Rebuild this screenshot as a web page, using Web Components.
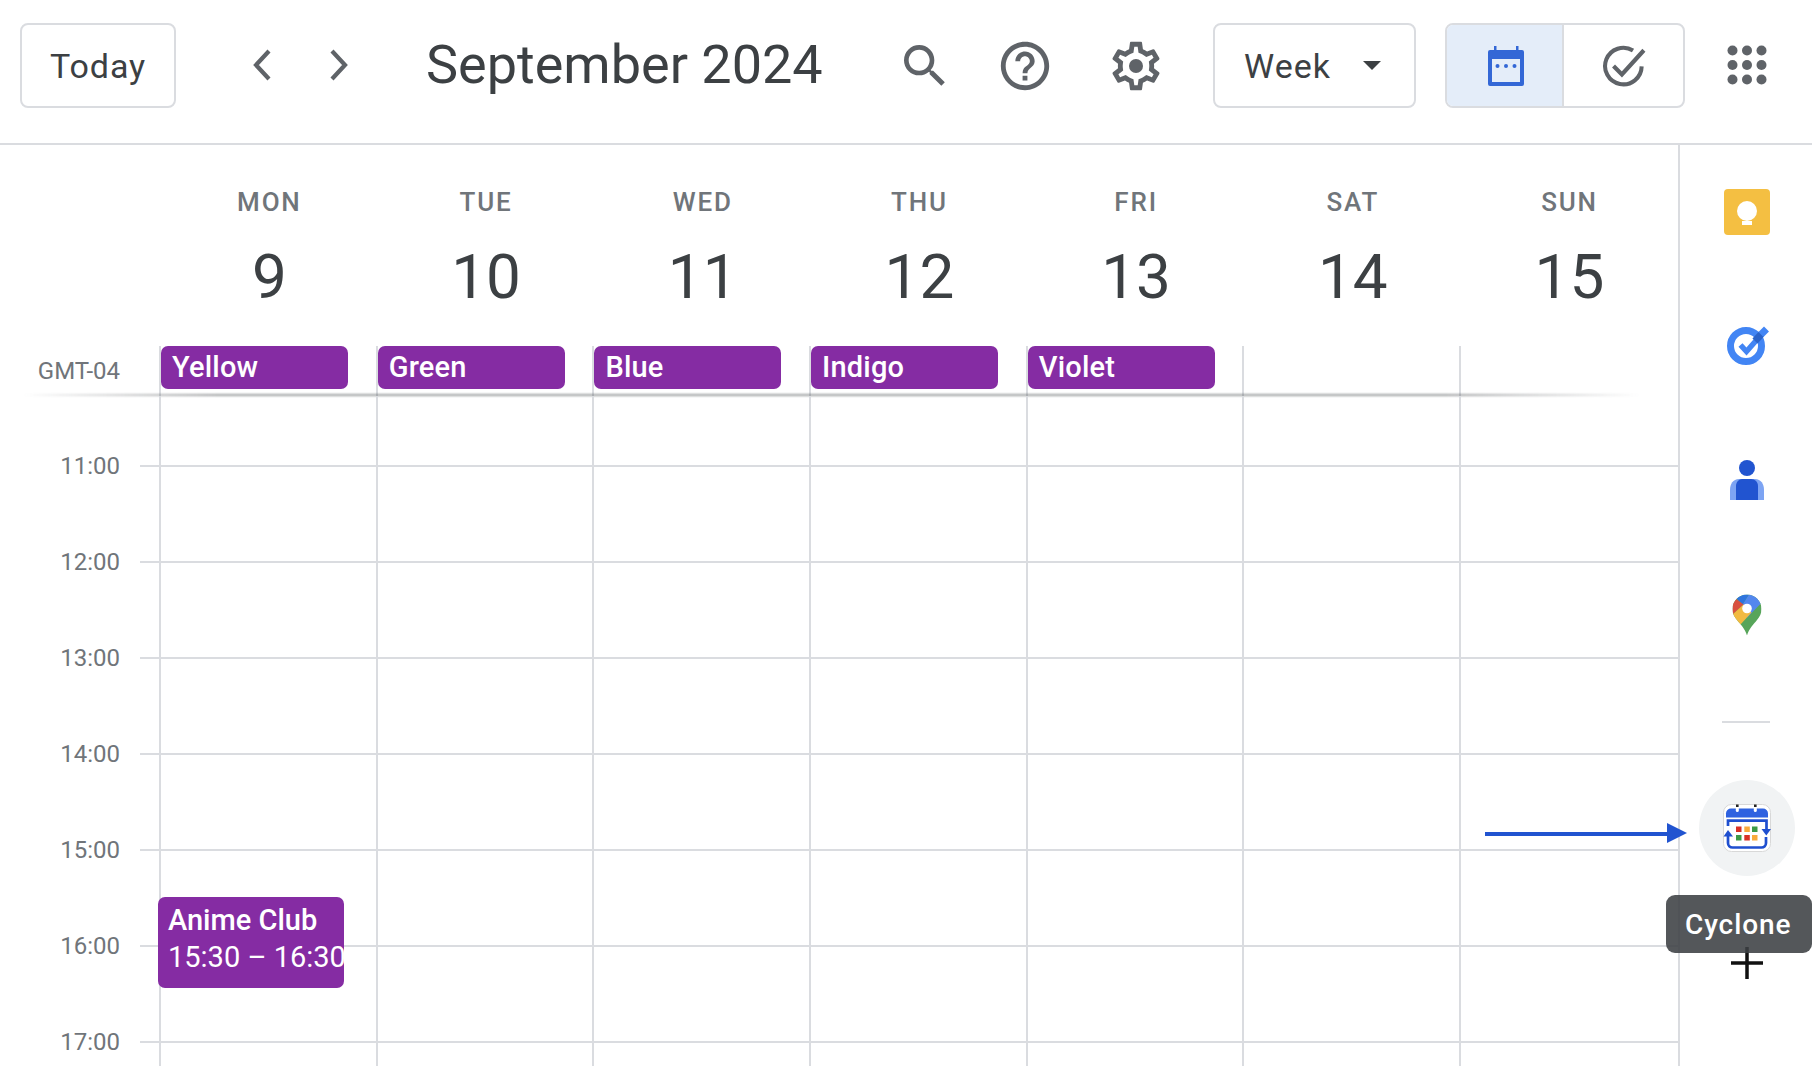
<!DOCTYPE html>
<html>
<head>
<meta charset="utf-8">
<title>Calendar</title>
<style>
  html, body { margin: 0; height: 100%; overflow: hidden; background: #fff; }
  body { font-family: Roboto, "Liberation Sans", sans-serif; color: #3c4043; }
</style>
</head>
<body>
<cal-app>
  <cal-toolbar slot="top" title-text="September 2024"></cal-toolbar>
  <week-view slot="main"></week-view>
  <side-panel slot="side"></side-panel>
</cal-app>

<script>
const GREY = '#5f6368';
const LINE = '#dadce0';

class CalApp extends HTMLElement {
  constructor() {
    super();
    this.shadow = this.attachShadow({ mode: 'open' });
  }

  connectedCallback() {
    this.shadow.innerHTML = `
      <style>
        :host { display: block; position: relative; width: 1812px; height: 1066px; overflow: hidden; }
        .body { display: flex; height: 921px; }
        .arrow { position: absolute; left: 1485px; top: 823px; }
        .tip {
          position: absolute; left: 1666px; top: 895px; width: 146px; height: 58px; box-sizing: border-box;
          padding-left: 19px; display: flex; align-items: center; border-radius: 9px;
          background: rgba(60, 64, 67, .88); color: #fff; font-size: 28px; font-weight: 500; letter-spacing: .9px;
        }
      </style>
      <slot name="top"></slot>
      <div class="body"><slot name="main"></slot><slot name="side"></slot></div>
      <svg class="arrow" width="202" height="20" viewBox="0 0 202 20">
        <path d="M0 11h184" stroke="#2154d0" stroke-width="4"/>
        <path d="M182 0l20 10-20 10z" fill="#2154d0"/>
      </svg>
      <div class="tip">Cyclone</div>
    `;
  }
}

class CalToolbar extends HTMLElement {
  constructor() {
    super();
    this.shadow = this.attachShadow({ mode: 'open' });
  }

  connectedCallback() {
    this.shadow.innerHTML = `
      <style>
        :host { display: flex; align-items: center; box-sizing: border-box; height: 145px; border-bottom: 2px solid ${LINE}; padding: 0 0 13px 20px; }
        svg { display: block; flex: none; }
        .btn {
          box-sizing: border-box; height: 85px; border: 2px solid ${LINE}; border-radius: 8px;
          display: flex; align-items: center; font-size: 34px; font-weight: 400; letter-spacing: .9px; margin-top: 1px;
        }
        .today { width: 156px; justify-content: center; }
        .title { font-size: 54px; line-height: 60px; margin-left: 64px; width: 471px; white-space: nowrap; }
        .week { width: 203px; padding-left: 29px; margin-left: 48px; margin-right: 29px; letter-spacing: 1px; color: #3c4043; }
        .week svg { margin-left: 32px; }
        .seg { width: 240px; overflow: hidden; padding: 0; }
        .seg div { height: 100%; display: flex; align-items: center; justify-content: center; }
        .seg .on { width: 117px; background: #e4edf9; border-right: 2px solid ${LINE}; padding-left: 2px; box-sizing: border-box; }
        .seg .off { flex: 1; }
      </style>
      <div class="btn today">Today</div>
      <svg style="margin-left:63px" width="44" height="44" viewBox="0 0 44 44"><path d="M30 8 L17 22 L30 36" fill="none" stroke="${GREY}" stroke-width="4.2"/></svg>
      <svg style="margin-left:35px" width="44" height="44" viewBox="0 0 44 44"><path d="M14 8 L27 22 L14 36" fill="none" stroke="${GREY}" stroke-width="4.2"/></svg>
      <div class="title">September 2024</div>
      <svg style="margin-top:1px" width="56" height="56" viewBox="0 0 24 24" fill="${GREY}"><path d="M15.5 14h-.79l-.28-.27A6.471 6.471 0 0 0 16 9.5 6.5 6.5 0 1 0 9.5 16c1.61 0 3.09-.59 4.23-1.57l.27.28v.79l5 4.99L20.49 19l-4.99-5zm-6 0C7.01 14 5 11.99 5 9.5S7.01 5 9.5 5 14 7.01 14 9.5 11.99 14 9.5 14z"/></svg>
      <svg style="margin-left:43px;margin-top:2px" width="58" height="58" viewBox="0 0 24 24" fill="${GREY}"><path d="M11 18h2v-2h-2v2zm1-16C6.48 2 2 6.48 2 12s4.48 10 10 10 10-4.48 10-10S17.52 2 12 2zm0 18c-4.41 0-8-3.59-8-8s3.59-8 8-8 8 3.59 8 8-3.59 8-8 8zm0-14c-2.21 0-4 1.79-4 4h2c0-1.1.9-2 2-2s2 .9 2 2c0 2-3 1.75-3 5h2c0-2.25 3-2.5 3-5 0-2.21-1.79-4-4-4z"/></svg>
      <svg style="margin-left:53px;margin-top:2px" width="58" height="58" viewBox="0 0 24 24" fill="${GREY}"><path d="M19.43 12.98c.04-.32.07-.64.07-.98 0-.34-.03-.66-.07-.98l2.11-1.65c.19-.15.24-.42.12-.64l-2-3.46c-.09-.16-.26-.25-.44-.25-.06 0-.12.01-.17.03l-2.49 1c-.52-.4-1.08-.73-1.69-.98l-.38-2.65C14.46 2.18 14.25 2 14 2h-4c-.25 0-.46.18-.49.42l-.38 2.65c-.61.25-1.17.59-1.69.98l-2.49-1c-.06-.02-.12-.03-.18-.03-.17 0-.34.09-.43.25l-2 3.46c-.13.22-.07.49.12.64l2.11 1.65c-.04.32-.07.65-.07.98 0 .33.03.66.07.98l-2.11 1.65c-.19.15-.24.42-.12.64l2 3.46c.09.16.26.25.44.25.06 0 .12-.01.17-.03l2.49-1c.52.4 1.08.73 1.69.98l.38 2.65c.03.24.24.42.49.42h4c.25 0 .46-.18.49-.42l.38-2.65c.61-.25 1.17-.59 1.69-.98l2.49 1c.06.02.12.03.18.03.17 0 .34-.09.43-.25l2-3.46c.12-.22.07-.49-.12-.64l-2.11-1.65zm-1.98-1.71c.04.31.05.52.05.73 0 .21-.02.43-.05.73l-.14 1.13.89.7 1.08.84-.7 1.21-1.27-.51-1.04-.42-.9.68c-.43.32-.84.56-1.25.73l-1.06.43-.16 1.13-.2 1.35h-1.4l-.19-1.35-.16-1.13-1.06-.43c-.43-.18-.83-.41-1.23-.71l-.91-.7-1.06.43-1.27.51-.7-1.21 1.08-.84.89-.7-.14-1.13c-.03-.31-.05-.54-.05-.74s.02-.43.05-.73l.14-1.13-.89-.7-1.08-.84.7-1.21 1.27.51 1.04.42.9-.68c.43-.32.84-.56 1.25-.73l1.06-.43.16-1.13.2-1.35h1.39l.19 1.35.16 1.13 1.06.43c.43.18.83.41 1.23.71l.91.7 1.06-.43 1.27-.51.7 1.21-1.07.85-.89.7.14 1.13z"/><circle cx="12" cy="12" r="2.9"/></svg>
      <div class="btn week">Week
        <svg width="18" height="9" viewBox="0 0 18 9"><path d="M0 0h18L9 9z" fill="#3c4043"/></svg>
      </div>
      <div class="btn seg">
        <div class="on">
          <svg width="36" height="40" viewBox="0 0 36 40">
            <path d="M6 0h2.500v5H6zM28 0h2.500v5H28z" fill="#3367d6"/>
            <path d="M2 4h32a2 2 0 0 1 2 2v32a2 2 0 0 1-2 2H2a2 2 0 0 1-2-2V6a2 2 0 0 1 2-2zm2 9v23h28V13z" fill="#3367d6"/>
            <circle cx="9.500" cy="20" r="2" fill="#3367d6"/><circle cx="18" cy="20" r="2" fill="#3367d6"/><circle cx="26.500" cy="20" r="2" fill="#3367d6"/>
          </svg>
        </div>
        <div class="off">
          <svg width="44" height="44" viewBox="0 0 42 42">
            <path d="M29.500 5.400A18 18 0 1 0 38 21" fill="none" stroke="${GREY}" stroke-width="4" transform="translate(1 1) scale(.97)"/>
            <path d="M11 21l8 8L40 6" fill="none" stroke="${GREY}" stroke-width="4"/>
          </svg>
        </div>
      </div>
      <svg style="margin-left:42px" width="40" height="40" viewBox="0 0 40 40" fill="${GREY}">
        ${[5.5, 20, 34.5].map(y => [5.5, 20, 34.5].map(x => `<circle cx="${x}" cy="${y}" r="5"/>`).join('')).join('')}
      </svg>
    `;
  }
}

class DayHead extends HTMLElement {
  constructor() {
    super();
    this.shadow = this.attachShadow({ mode: 'open' });
  }

  connectedCallback() {
    this.shadow.innerHTML = `
      <style>
        :host { display: flex; flex-direction: column; align-items: center; width: 216.7px; }
        .name { font-size: 26px; font-weight: 500; letter-spacing: 1.8px; line-height: 30px; color: #70757a; margin-top: 42px; }
        .num { font-size: 62px; line-height: 70px; margin-top: 25px; color: #3c4043; }
      </style>
      <div class="name">${this.getAttribute('name')}</div>
      <div class="num">${this.getAttribute('num')}</div>
    `;
  }
}

class AllDayChip extends HTMLElement {
  constructor() {
    super();
    this.shadow = this.attachShadow({ mode: 'open' });
  }

  connectedCallback() {
    this.shadow.innerHTML = `
      <style>
        :host {
          display: block; box-sizing: border-box; width: 187px; height: 43px; padding-left: 11px;
          background: #852ca3; color: #fff; border-radius: 7px; font-size: 29px; letter-spacing: .2px; font-weight: 500; line-height: 43px;
        }
      </style>
      <slot></slot>
    `;
  }
}

class CalEvent extends HTMLElement {
  constructor() {
    super();
    this.shadow = this.attachShadow({ mode: 'open' });
  }

  connectedCallback() {
    this.shadow.innerHTML = `
      <style>
        :host {
          position: absolute; left: -3px; top: 501px; width: 186px; height: 91px; box-sizing: border-box;
          padding: 5px 0 0 10px; background: #852ca3; color: #fff; border-radius: 7px; overflow: hidden;
          font-size: 29px; line-height: 37px; white-space: nowrap; z-index: 1;
        }
        .t { font-weight: 500; }
      </style>
      <div class="t">${this.getAttribute('name')}</div>
      <div>${this.getAttribute('time')}</div>
    `;
  }
}

class DayColumn extends HTMLElement {
  constructor() {
    super();
    this.shadow = this.attachShadow({ mode: 'open' });
  }

  connectedCallback() {
    const hours = Array(7).fill('<div class="h"></div>').join('');
    this.shadow.innerHTML = `
      <style>
        :host { display: block; position: relative; box-sizing: border-box; width: 216.7px; border-left: 2px solid ${LINE}; }
        .top { height: 69px; }
        .h { height: 94px; border-top: 2px solid ${LINE}; }
      </style>
      <div class="top"></div>${hours}<slot></slot>
    `;
  }
}

class WeekView extends HTMLElement {
  constructor() {
    super();
    this.shadow = this.attachShadow({ mode: 'open' });
  }

  connectedCallback() {
    const days = [['MON', 9, 'Yellow'], ['TUE', 10, 'Green'], ['WED', 11, 'Blue'], ['THU', 12, 'Indigo'], ['FRI', 13, 'Violet'], ['SAT', 14, ''], ['SUN', 15, '']];
    const times = ['11:00', '12:00', '13:00', '14:00', '15:00', '16:00', '17:00'];
    this.shadow.innerHTML = `
      <style>
        :host { display: block; flex: none; width: 1678px; height: 921px; overflow: hidden; }
        .heads { display: flex; height: 201px; padding-left: 161px; }
        .allday { display: flex; position: relative; height: 50px; }
        .gmt { width: 120px; padding-right: 39px; text-align: right; font-size: 24px; line-height: 50px; color: #70757a; }
        .cell { box-sizing: border-box; width: 216.7px; border-left: 2px solid ${LINE}; }
        .shade {
          position: absolute; left: 23px; right: 38px; top: 48px; height: 2px; filter: blur(1px);
          background: linear-gradient(90deg, rgba(60,64,67,0), rgba(60,64,67,.5) 12%, rgba(60,64,67,.5) 88%, rgba(60,64,67,0));
        }
        .grid { display: flex; }
        .gutter { width: 120px; margin-top: 52px; margin-right: 20px; flex: none; text-align: right; font-size: 24px; line-height: 36px; color: #70757a; }
        .gutter div { height: 96px; }
        .tick { width: 19px; flex: none; }
        .tick .top { height: 69px; }
        .tick .h { height: 94px; border-top: 2px solid ${LINE}; }
        day-column:last-child { width: auto; flex: 1; }
      </style>
      <div class="heads">${days.map(d => `<day-head name="${d[0]}" num="${d[1]}"></day-head>`).join('')}</div>
      <div class="allday">
        <div class="gmt">GMT-04</div>
        ${days.map(d => `<div class="cell">${d[2] ? `<all-day-chip>${d[2]}</all-day-chip>` : ''}</div>`).join('')}
        <div class="shade"></div>
      </div>
      <div class="grid">
        <div class="gutter">${times.map(t => `<div>${t}</div>`).join('')}</div>
        <div class="tick"><div class="top"></div>${times.map(() => '<div class="h"></div>').join('')}</div>
        ${days.map((d, i) => `<day-column>${i === 0 ? '<cal-event name="Anime Club" time="15:30 – 16:30"></cal-event>' : ''}</day-column>`).join('')}
      </div>
    `;
  }
}

class SidePanel extends HTMLElement {
  constructor() {
    super();
    this.shadow = this.attachShadow({ mode: 'open' });
  }

  connectedCallback() {
    this.shadow.innerHTML = `
      <style>
        :host { display: flex; flex-direction: column; align-items: center; box-sizing: border-box; flex: none; width: 134px; height: 921px; border-left: 2px solid ${LINE}; padding: 43px 0 0 2px; }
        svg { display: block; flex: none; }
        .sp { margin-top: 86px; }
        .rule { width: 48px; height: 2px; background: ${LINE}; margin-top: 82px; margin-right: 2px; flex: none; }
        .cy { width: 96px; height: 96px; border-radius: 50%; background: #f1f3f4; margin-top: 57px; display: flex; align-items: center; justify-content: center; flex: none; }
      </style>

      <svg width="48" height="48" viewBox="0 0 48 48">
        <rect x="1" y="1" width="46" height="46" rx="4" fill="#f4bf42"/>
        <circle cx="24" cy="23" r="10" fill="#fff"/>
        <rect x="19" y="33" width="10" height="4" fill="#fff"/>
      </svg>

      <svg class="sp" width="48" height="48" viewBox="0 0 48 48">
        <circle cx="23" cy="24" r="15.500" fill="none" stroke="#4285f4" stroke-width="7"/>
        <path d="M17.500 23l6 6.500L38 13" fill="none" stroke="#4285f4" stroke-width="5.500"/>
        <path d="M32 19l6.500-7" fill="none" stroke="#2b63c9" stroke-width="7"/>
        <path d="M38 12.500l5.500-5.500" fill="none" stroke="#4285f4" stroke-width="7"/>
      </svg>

      <svg class="sp" width="48" height="48" viewBox="0 0 48 48">
        <circle cx="24" cy="12" r="8" fill="#2154d0"/>
        <path d="M7 44V34c0-6 3-11 9-11h16c6 0 9 5 9 11v10z" fill="#7da4f3"/>
        <path d="M13 44V30c0-4 3-7 6-7h9c4 0 7 3 7 7v14z" fill="#2154d0"/>
      </svg>

      <svg class="sp" style="margin-top:87px" width="48" height="48" viewBox="0 0 48 48">
        <defs><clipPath id="pin"><path d="M14.500 0C6.500 0 0 6.500 0 14.500 0 19 1.700 22 4.500 25.500 8 30 12.500 34 14.500 41 16.500 34 21 30 24.500 25.500 27.300 22 29 19 29 14.500 29 6.500 22.500 0 14.500 0z"/></clipPath></defs>
        <g transform="translate(9.500 3.500)" clip-path="url(#pin)">
          <rect x="-1" y="-1" width="32" height="44" fill="#57a55a"/>
          <path d="M17-1h14v7.200L14.500 23.300 10 10z" fill="#5387ee"/>
          <path d="M-1-1h18L10 10z" fill="#2f74de"/>
          <path d="M-1-1l4 5 8 6L-1 21z" fill="#d9503f"/>
          <path d="M-1 21L11 10l8 8L8 30l-9 0z" fill="#f2ba41"/>
          <circle cx="14.500" cy="14" r="4.800" fill="#fff"/>
        </g>
      </svg>

      <div class="rule"></div>

      <div class="cy">
        <svg width="48" height="48" viewBox="0 0 48 48">
          <rect x=".5" y=".5" width="47" height="47" rx="8" fill="#fff" stroke="#d8d8d8"/>
          <path d="M3 13.500V9.500a5 5 0 0 1 5-5h32a5 5 0 0 1 5 5v4z" fill="#2f62e0"/>
          <rect x="12.800" y="2" width="3" height="6" rx="1.500" fill="#fff"/><rect x="30.800" y="2" width="3" height="6" rx="1.500" fill="#fff"/>
          <rect x="13" y=".5" width="2.600" height="2.500" fill="#222"/><rect x="31" y=".5" width="2.600" height="2.500" fill="#222"/>
          <path d="M5 22v-5.300h38.500V26" fill="none" stroke="#1f4fcf" stroke-width="2.700"/>
          <path d="M38.500 25h9.500L43.300 31.500z" fill="#1f4fcf"/>
          <path d="M5 32v7a4.500 4.500 0 0 0 4.500 4.500h29a4.500 4.500 0 0 0 4.500-4.500v-6" fill="none" stroke="#1f4fcf" stroke-width="2.700"/>
          <path d="M.5 32.500h9.500L5 26z" fill="#1f4fcf"/>
          <g>
            <rect x="13" y="22.500" width="5.500" height="5.500" fill="#d93025"/><rect x="21.300" y="22.500" width="5.500" height="5.500" fill="#f9ab3c"/><rect x="29" y="22.500" width="5.500" height="5.500" fill="#3c9a46"/>
            <rect x="13" y="31" width="5.500" height="5.500" fill="#3c9a46"/><rect x="21.300" y="31" width="5.500" height="5.500" fill="#d93025"/><rect x="29" y="31" width="5.500" height="5.500" fill="#f9ab3c"/>
          </g>
        </svg>
      </div>

      <svg style="margin-top:71px" width="32" height="32" viewBox="0 0 32 32"><path d="M0 16h32M16 0v32" stroke="#111" stroke-width="3.500"/></svg>
    `;
  }
}

customElements.define('cal-app', CalApp);
customElements.define('cal-toolbar', CalToolbar);
customElements.define('day-head', DayHead);
customElements.define('all-day-chip', AllDayChip);
customElements.define('cal-event', CalEvent);
customElements.define('day-column', DayColumn);
customElements.define('week-view', WeekView);
customElements.define('side-panel', SidePanel);
</script>
</body>
</html>
